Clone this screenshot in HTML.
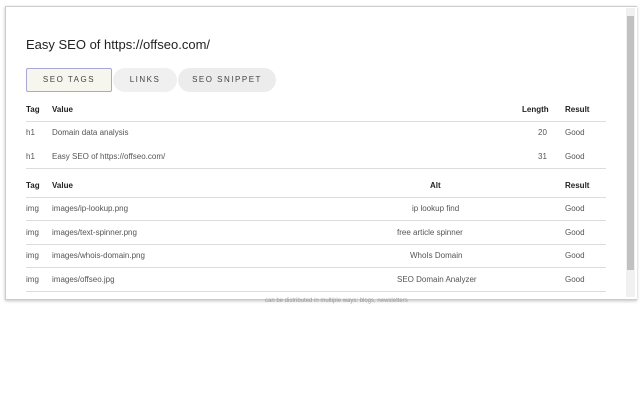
<!DOCTYPE html>
<html><head><style>
body{margin:0;width:640px;height:400px;background:#fff;font-family:"Liberation Sans",sans-serif;position:relative;overflow:hidden}
.pop{position:absolute;left:5px;top:6px;width:631px;height:292px;border:1px solid #ccc;border-right:none;background:#fff;box-shadow:0 1px 3px rgba(0,0,0,.25)}
h1{position:absolute;left:20px;top:30px;margin:0;font-size:13px;font-weight:normal;color:#222}
.tab{position:absolute;top:61px;height:24px;line-height:24px;font-size:8px;letter-spacing:1.5px;text-align:center;color:#444}
.t1{left:20px;width:84px;border:1px solid #a8a8d0;background:#f6f6ef;border-radius:2px;height:22px;line-height:22px}
.t2{left:107px;width:64px;background:#f0f0f0;border-radius:12px}
.t3{left:172px;width:98px;background:#ececec;border-radius:12px}
.r{position:absolute;left:20px;width:580px;font-size:8px;color:#555}
.r span{position:absolute}
.hd{color:#222;font-weight:bold}
.ln{position:absolute;left:20px;width:580px;height:1px;background:#ddd}
.sb{position:absolute;left:626px;top:8px;width:9px;height:289px;background:#f1f1f1}
.th{position:absolute;left:627px;top:16px;width:7px;height:254px;background:#c1c1c1}
</style></head><body>
<div class="pop">
<h1>Easy SEO of https://offseo.com/</h1>
<div class="tab t1">SEO TAGS</div><div class="tab t2">LINKS</div><div class="tab t3">SEO SNIPPET</div>
<div class="r hd" style="top:98px"><span style="left:0">Tag</span><span style="left:26px">Value</span><span style="left:496px">Length</span><span style="left:539px">Result</span></div>
<div class="ln" style="top:114px"></div>
<div class="r" style="top:121px"><span style="left:0">h1</span><span style="left:26px">Domain data analysis</span><span style="left:512px">20</span><span style="left:539px">Good</span></div>
<div class="r" style="top:145px"><span style="left:0">h1</span><span style="left:26px">Easy SEO of https://offseo.com/</span><span style="left:512px">31</span><span style="left:539px">Good</span></div>
<div class="ln" style="top:161px"></div>
<div class="r hd" style="top:174px"><span style="left:0">Tag</span><span style="left:26px">Value</span><span style="left:404px">Alt</span><span style="left:539px">Result</span></div>
<div class="ln" style="top:190px"></div>
<div class="r" style="top:197px"><span style="left:0">img</span><span style="left:26px">images/ip-lookup.png</span><span style="left:386px">ip lookup find</span><span style="left:539px">Good</span></div>
<div class="ln" style="top:213px"></div>
<div class="r" style="top:221px"><span style="left:0">img</span><span style="left:26px">images/text-spinner.png</span><span style="left:371px">free article spinner</span><span style="left:539px">Good</span></div>
<div class="ln" style="top:237px"></div>
<div class="r" style="top:244px"><span style="left:0">img</span><span style="left:26px">images/whois-domain.png</span><span style="left:384px">WhoIs Domain</span><span style="left:539px">Good</span></div>
<div class="ln" style="top:260px"></div>
<div class="r" style="top:268px"><span style="left:0">img</span><span style="left:26px">images/offseo.jpg</span><span style="left:371px">SEO Domain Analyzer</span><span style="left:539px">Good</span></div>
<div class="ln" style="top:284px"></div>
</div>
<div class="sb"></div><div class="th"></div>
<div style="position:absolute;left:265px;top:298px;font-size:6px;color:#999">can be distributed in multiple ways: blogs, newsletters</div>
</body></html>
